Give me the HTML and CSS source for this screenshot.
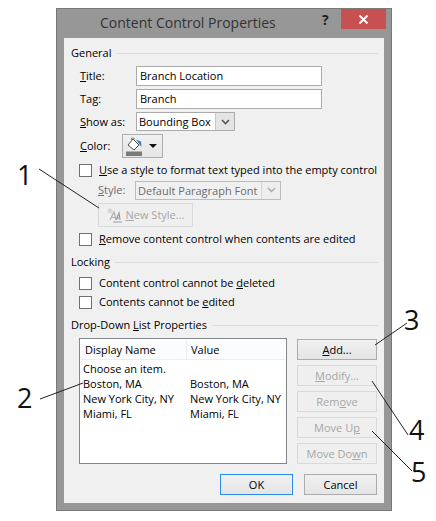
FILE: index.html
```html
<!DOCTYPE html>
<html lang="en">
<head>
  <meta charset="UTF-8" />
  <title>Content Control Properties</title>
  <link rel="stylesheet" href="styles.css">
</head>
<body>
  <div class="dialog">
    <div class="titlebar">
      <div class="title">Content Control Properties</div>
      <div class="help">?</div>
      <div class="close">
        <svg width="11" height="9" viewBox="0 0 11 9"><path d="M1.5 0.5 L9.5 8.5 M9.5 0.5 L1.5 8.5" stroke="#fff" stroke-width="2" fill="none"/></svg>
      </div>
    </div>

    <div class="content">
      <div class="section"><span>General</span><i></i></div>

      <div class="field first-field">
        <label><u>T</u>itle:</label>
        <div class="input">Branch Location</div>
      </div>
      <div class="field">
        <label>Ta<u>g</u>:</label>
        <div class="input">Branch</div>
      </div>
      <div class="field show-as">
        <label><u>S</u>how as:</label>
        <div class="combo">
          <span class="combo-text">Bounding Box</span>
          <span class="combo-arrow">
            <svg width="9" height="6" viewBox="0 0 9 6"><path d="M1 1 L4.5 4.5 L8 1" stroke="#555" stroke-width="1.6" fill="none"/></svg>
          </span>
        </div>
      </div>
      <div class="color-row">
        <label><u>C</u>olor:</label>
        <div class="color-btn">
          <svg width="16" height="19" viewBox="0 0 16 19">
            <path d="M7 2 L13 8 L8 13 L2 8 Z" fill="#fff" stroke="#4d4d4d" stroke-width="1"/>
            <path d="M5.5 4 V1 H8 V3" fill="none" stroke="#8a8a8a" stroke-width="1"/>
            <path d="M10 2.5 L15 4.5 L15.5 10 L13.5 7.5 Z" fill="#3f7fbf"/>
            <rect x="0" y="14.5" width="16" height="4.5" fill="#7b7b7b"/>
          </svg>
          <span class="caret"></span>
        </div>
      </div>

      <div class="check-row"><span class="check"></span><span><u>U</u>se a style to format text typed into the empty control</span></div>

      <div class="style-row">
        <label><u>S</u>tyle:</label>
        <div class="combo disabled">
          <span class="combo-text">Default Paragraph Font</span>
          <span class="combo-arrow">
            <svg width="9" height="6" viewBox="0 0 9 6"><path d="M1 1 L4.5 4.5 L8 1" stroke="#aaa" stroke-width="1.4" fill="none"/></svg>
          </span>
        </div>
      </div>

      <div class="btn disabled new-style">
        <svg width="15" height="15" viewBox="0 0 15 15">
          <path d="M3 0 V6 M0 3 H6 M1 1 L5 5 M5 1 L1 5" stroke="#d0d0d0" stroke-width="1" fill="none"/>
          <path d="M3 12 L7 4 L9 12 M4.5 9.5 H8" stroke="#b0b0b0" stroke-width="1.2" fill="none"/>
          <path d="M9 12 L12 5 L13 12 M10 10 H13 M6 14 H15" stroke="#999" stroke-width="1.2" fill="none"/>
        </svg>
        <span><u>N</u>ew Style...</span>
      </div>

      <div class="check-row remove-row"><span class="check"></span><span><u>R</u>emove content control when contents are edited</span></div>

      <div class="section locking"><span>Locking</span><i></i></div>
      <div class="check-row lock-first"><span class="check"></span><span>Content control cannot be <u>d</u>eleted</span></div>
      <div class="check-row lock-second"><span class="check"></span><span>Contents cannot be <u>e</u>dited</span></div>

      <div class="section dropdown"><span>Drop-Down <u>L</u>ist Properties</span><i></i></div>

      <div class="list-area">
        <div class="listbox">
          <div class="list-head">
            <div class="col-name">Display Name</div>
            <div class="col-value">Value</div>
          </div>
          <div class="list-row first-row"><span class="cell-name">Choose an item.</span><span></span></div>
          <div class="list-row"><span class="cell-name">Boston, MA</span><span>Boston, MA</span></div>
          <div class="list-row"><span class="cell-name">New York City, NY</span><span>New York City, NY</span></div>
          <div class="list-row"><span class="cell-name">Miami, FL</span><span>Miami, FL</span></div>
        </div>
        <div class="side-btns">
          <div class="btn"><span><u>A</u>dd...</span></div>
          <div class="btn disabled"><span><u>M</u>odify...</span></div>
          <div class="btn disabled"><span>Rem<u>o</u>ve</span></div>
          <div class="btn disabled"><span>Move U<u>p</u></span></div>
          <div class="btn disabled"><span>Move Do<u>w</u>n</span></div>
        </div>
      </div>

      <div class="footer">
        <div class="btn default">OK</div>
        <div class="btn">Cancel</div>
      </div>
    </div>
  </div>

  <svg class="callouts" width="436" height="521" viewBox="0 0 436 521">
    <g stroke="#222" stroke-width="1" fill="none">
      <line x1="39" y1="169" x2="99" y2="208"/>
      <line x1="40" y1="399" x2="83" y2="383"/>
      <line x1="375" y1="345" x2="407" y2="323"/>
      <line x1="372" y1="381" x2="408" y2="435"/>
      <line x1="372" y1="431" x2="412" y2="471"/>
    </g>
  </svg>
  <span class="num n1">1</span>
  <span class="num n2">2</span>
  <span class="num n3">3</span>
  <span class="num n4">4</span>
  <span class="num n5">5</span>
</body>
</html>
```

FILE: styles.css
```css
* { box-sizing: border-box; }
body {
  margin: 0;
  padding: 8px 0 0 56px;
  background: #fff;
  font-family: "Open Sans", "Noto Sans", sans-serif;
  font-size: 11px;
  line-height: 16px;
  color: #000;
  position: relative;
  width: 436px;
  height: 521px;
  overflow: hidden;
}
.dialog {
  width: 336px;
  height: 503px;
  background: #979797;
  border: 1px solid #787878;
}
.titlebar {
  height: 29px;
  position: relative;
  display: flex;
}
.title {
  margin-left: 43px;
  margin-top: 2px;
  font-size: 14px;
  line-height: 24px;
  color: #333;
}
.help {
  position: absolute;
  left: 265px;
  top: 3px;
  font-weight: bold;
  font-size: 14px;
  line-height: 16px;
  color: #222;
}
.close {
  position: absolute;
  right: 5px;
  top: 0;
  width: 45px;
  height: 20px;
  background: #c75050;
  display: flex;
  align-items: center;
  justify-content: center;
}
.content {
  margin-left: 7px;
  width: 320px;
  height: 465px;
  background: #f0f0f0;
  padding: 7px 0 0 7px;
}
.section {
  display: flex;
  align-items: center;
  height: 16px;
  padding-right: 6px;
}
.section i {
  flex: 1;
  height: 1px;
  background: #dcdcdc;
  margin-left: 5px;
}
.field {
  display: flex;
  align-items: center;
  height: 20px;
  margin-bottom: 3px;
  padding-left: 9px;
}
.first-field { margin-top: 5px; }
.show-as { height: 19px; }
.field label { width: 56px; flex: none; }
.input {
  width: 186px;
  height: 20px;
  background: #fff;
  border: 1px solid #ababab;
  padding-left: 3px;
  line-height: 18px;
}
.combo {
  display: flex;
  width: 99px;
  height: 19px;
  background: #fff;
  border: 1px solid #ababab;
}
.combo-text {
  flex: 1;
  padding-left: 2px;
  line-height: 17px;
  white-space: nowrap;
  overflow: hidden;
}
.combo-arrow {
  flex: none;
  width: 19px;
  background: #e4e4e4;
  border-left: 1px solid #c8c8c8;
  display: flex;
  align-items: center;
  justify-content: center;
}
.combo.disabled {
  width: 146px;
  background: #f0f0f0;
  border-color: #bcbcbc;
  color: #6d6d6d;
}
.combo.disabled .combo-arrow { background: #eee; border-left-color: #d5d5d5; }
.color-row {
  display: flex;
  align-items: center;
  height: 24px;
  padding-left: 9px;
}
.color-row label { width: 42px; flex: none; }
.color-btn {
  width: 41px;
  height: 24px;
  border: 1px solid #aeaeae;
  background: linear-gradient(#f0f0f0, #e6e6e6);
  display: flex;
  align-items: center;
  padding-left: 3px;
  gap: 7px;
}
.caret {
  width: 0;
  height: 0;
  border-left: 4px solid transparent;
  border-right: 4px solid transparent;
  border-top: 4px solid #111;
}
.check-row {
  display: flex;
  align-items: center;
  height: 16px;
  padding-left: 8px;
  margin-top: 4px;
  white-space: nowrap;
}
.check {
  flex: none;
  width: 13px;
  height: 13px;
  background: #fff;
  border: 1px solid #707070;
  margin-right: 7px;
}
.style-row {
  display: flex;
  align-items: center;
  height: 18px;
  margin-top: 3px;
  padding-left: 27px;
  color: #6d6d6d;
}
.style-row label { width: 37px; flex: none; }
.btn {
  display: flex;
  align-items: center;
  justify-content: center;
  height: 21px;
  border: 1px solid #acacac;
  background: linear-gradient(#f0f0f0, #e5e5e5);
}
.btn.disabled {
  border-color: #d9d9d9;
  background: #efefef;
  color: #a6a6a6;
}
.btn.default { border-color: #2a8ce8; }
.new-style {
  width: 95px;
  height: 24px;
  margin: 4px 0 0 27px;
  gap: 4px;
}
.remove-row { margin-top: 4px; }
.locking { margin-top: 7px; }
.lock-first { margin-top: 5px; }
.lock-second { margin-top: 3px; }
.dropdown { margin-top: 7px; }
.list-area {
  display: flex;
  margin-top: 5px;
  padding-left: 8px;
}
.listbox {
  width: 208px;
  height: 126px;
  background: #fff;
  border: 1px solid #82878c;
  padding: 1px;
}
.list-head {
  display: flex;
  height: 20px;
  line-height: 20px;
  background: #fbfcfd;
  border-bottom: 1px solid #e6eef6;
}
.col-name {
  width: 106px;
  padding-left: 4px;
  border-right: 1px solid #e6eef6;
}
.col-value { padding-left: 4px; }
.list-row {
  display: flex;
  height: 15px;
  line-height: 15px;
  padding-left: 2px;
  white-space: nowrap;
}
.first-row { margin-top: 1px; }
.cell-name { width: 107px; flex: none; }
.side-btns {
  margin-left: 10px;
  width: 80px;
  display: flex;
  flex-direction: column;
  gap: 5px;
  padding-top: 1px;
}
.footer {
  display: flex;
  gap: 11px;
  margin-top: 10px;
  padding-left: 149px;
}
.footer .btn { width: 73px; }
.callouts {
  position: absolute;
  left: 0;
  top: 0;
}
.num {
  position: absolute;
  font-family: "Open Sans", sans-serif;
  font-size: 27px;
  line-height: 30px;
  color: #111;
}
.n1 { left: 17px; top: 160px; }
.n2 { left: 17px; top: 383px; }
.n3 { left: 404px; top: 305px; }
.n4 { left: 409px; top: 415px; }
.n5 { left: 411px; top: 457px; }
```
